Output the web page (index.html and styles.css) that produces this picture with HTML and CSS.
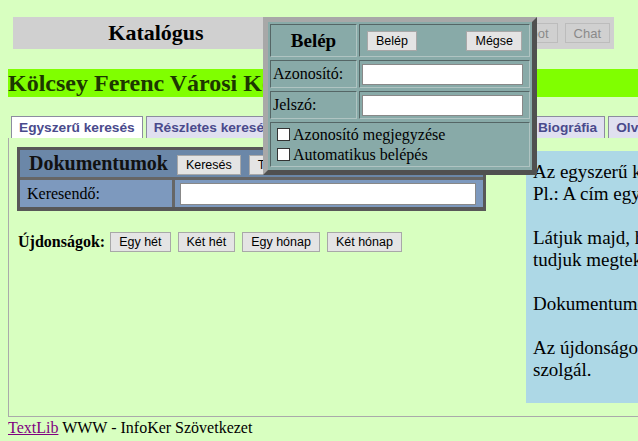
FILE: index.html
```html
<!DOCTYPE html>
<html lang="hu">
<head>
    <meta charset="UTF-8">
    <meta name="viewport" content="width=device-width, initial-scale=1.0">
    <title>Katalógus</title>
    <link rel="stylesheet" href="styles.css">
</head>
<body>

<div class="page">
    <div class="topbar">
        <div class="title">Katalógus</div>
        <div class="topbuttons">
            <button class="tbtn" disabled>Belépés</button>
            <button class="tbtn" disabled>Kosár</button>
            <button class="tbtn" disabled>Robot</button>
            <button class="tbtn" disabled>Chat</button>
        </div>
    </div>

    <h1 class="library">Kölcsey Ferenc Városi Könyvtár</h1>

    <div class="tabs">
        <div class="tab active">Egyszerű keresés</div>
        <div class="tab">Részletes keresés</div>
        <div class="tab">Böngészés</div>
        <div class="tab">Tárgyszavas keresés</div>
        <div class="tab">Biográfia</div>
        <div class="tab">Olvasójegy</div>
    </div>

    <div class="panel">
        <div class="leftcol">
            <table class="doc">
                <tr>
                    <th colspan="2">
                        <span class="doc-title">Dokumentumok</span>
                        <button class="btn">Keresés</button>
                        <button class="btn">Törlés</button>
                    </th>
                </tr>
                <tr>
                    <td class="doc-label">Keresendő:</td>
                    <td class="doc-field"><input type="text" class="search-input"></td>
                </tr>
            </table>

            <div class="news">
                <span class="news-label">Újdonságok:</span>
                <button class="btn">Egy hét</button>
                <button class="btn">Két hét</button>
                <button class="btn">Egy hónap</button>
                <button class="btn">Két hónap</button>
            </div>
        </div>

        <div class="info">
            <p>Az egyszerű keresésnél egy vagy több szót adhatunk meg.<br>Pl.: A cím egy szavát vagy a szerző nevét.</p>
            <p>Látjuk majd, hogy a találatokat hogyan<br>tudjuk megtekinteni és rendezni.</p>
            <p>Dokumentumok keresése a teljes katalógusban.</p>
            <p>Az újdonságok gomb a friss beszerzések listázására<br>szolgál.</p>
        </div>
    </div>

    <div class="footer"><a href="#" class="visited">TextLib</a> WWW - InfoKer Szövetkezet</div>
</div>

<div class="login">
    <table class="login-table">
        <tr>
            <td class="login-title">Belép</td>
            <td class="login-buttons">
                <button class="btn">Belép</button>
                <button class="btn">Mégse</button>
            </td>
        </tr>
        <tr>
            <td class="login-label">Azonosító:</td>
            <td class="login-field"><input type="text" class="login-input"></td>
        </tr>
        <tr>
            <td class="login-label">Jelszó:</td>
            <td class="login-field"><input type="password" class="login-input"></td>
        </tr>
        <tr>
            <td colspan="2" class="login-options">
                <label class="check"><input type="checkbox"> Azonosító megjegyzése</label>
                <label class="check"><input type="checkbox"> Automatikus belépés</label>
            </td>
        </tr>
    </table>
</div>

</body>
</html>
```

FILE: styles.css
```css
html {
    overflow: hidden;
}
body {
    font-family: "Liberation Serif", "Times New Roman", serif;
    font-size: 16px;
    background-color: #d8ffc0;
    margin: 8px 0 8px 8px;
    color: #000;
}
.page {
    width: 900px;
}
.topbar {
    display: flex;
    align-items: center;
    width: 601px;
    height: 32px;
    margin: 9px 0 0 5px;
    background-color: #d0d0d0;
}
.title {
    width: 286px;
    text-align: center;
    font-weight: bold;
    font-size: 22px;
}
.topbuttons {
    flex: 1;
    display: flex;
    justify-content: flex-end;
    gap: 7px;
    padding-right: 4px;
}
.tbtn {
    font-family: "Liberation Sans", Arial, sans-serif;
    font-size: 13px;
    height: 20px;
    padding: 0 8px;
    background-color: #d0d0d0;
    color: #8a8a8a;
    border: 1px solid #bcbcbc;
    border-radius: 0;
}
.library {
    margin: 20px 0 0 0;
    height: 28px;
    line-height: 28px;
    font-size: 24px;
    font-weight: bold;
    color: #1c3800;
    background-color: #80ff00;
}
.tabs {
    display: flex;
    gap: 3px;
    margin-top: 19px;
    padding-left: 3px;
}
.tab {
    height: 21px;
    line-height: 21px;
    padding: 0 7px;
    font-family: "Liberation Sans", Arial, sans-serif;
    font-size: 13.7px;
    font-weight: bold;
    color: #4a4a8c;
    background-color: #e0e0f0;
    border: 1px solid #8c8ca0;
    border-bottom: none;
    white-space: nowrap;
}
.tab.active {
    background-color: #fff;
}
.panel {
    display: flex;
    align-items: flex-start;
    gap: 40px;
    padding: 9px 0 13px 8px;
    border-left: 1px solid #aaa;
    border-bottom: 1px solid #aaa;
}
.leftcol {
    width: 469px;
}
.btn {
    font-family: "Liberation Sans", Arial, sans-serif;
    font-size: 12.5px;
    height: 20px;
    padding: 0 8px;
    background-color: #e4e4e4;
    color: #000;
    border: 1px solid #a8a8a8;
    border-radius: 0;
}
.doc {
    width: 469px;
    border-collapse: separate;
    border-spacing: 0;
    border: 3px solid #585858;
    border-bottom-width: 4px;
}
.doc th {
    height: 27px;
    padding: 0 0 0 9px;
    text-align: left;
    background-color: #6b87a8;
}
.doc-title {
    font-size: 20px;
    font-weight: bold;
    color: #111;
    margin-right: 5px;
}
.doc th .btn {
    margin-right: 4px;
    vertical-align: 1px;
}
.doc td {
    height: 27px;
    background-color: #7d99be;
    border-top: 3px solid #666;
    padding: 0;
}
.doc-label {
    width: 145px;
    padding-left: 7px !important;
    border-right: 3px solid #666;
}
.doc-field {
    padding-left: 5px !important;
}
.search-input {
    display: block;
    width: 296px;
    height: 22px;
    box-sizing: border-box;
    border: 1px solid #888;
    background-color: #fff;
}
.news {
    display: flex;
    align-items: center;
    gap: 7px;
    margin-top: 21px;
    padding-left: 1px;
}
.news-label {
    font-weight: bold;
    margin-right: -2px;
}
.info {
    width: 320px;
    margin-top: 4px;
    padding: 10px 7px 22px;
    background-color: #add8e6;
    font-size: 19px;
    line-height: 22px;
    white-space: nowrap;
}
.info p {
    margin: 0 0 22px 0;
}
.info p:last-child {
    margin-bottom: 0;
}
.footer {
    margin-top: 1px;
    line-height: 19px;
}
.visited {
    color: #800080;
}

/* login popup */
.login {
    position: absolute;
    left: 263px;
    top: 17px;
    width: 264px;
    background-color: #88aaa8;
    border-style: solid;
    border-width: 5px;
    border-color: #a8a8a8 #505050 #505050 #a8a8a8;
}
.login-table {
    width: 264px;
    border-collapse: separate;
    border-spacing: 2px 3px;
    margin: -1px 0 0 0;
}
.login-table td {
    border: 1px solid;
    border-color: #566 #b0c4c2 #b0c4c2 #566;
    padding: 0;
}
.login-title {
    width: 85px;
    height: 31px;
    text-align: center;
    font-weight: bold;
    font-size: 19px;
}
.login-buttons {
    padding: 0 7px !important;
}
.login-buttons .btn + .btn {
    float: right;
}
.login-label {
    height: 26px;
    padding-left: 2px !important;
}
.login-field {
    padding-left: 2px !important;
}
.login-input {
    display: block;
    width: 161px;
    height: 21px;
    box-sizing: border-box;
    border: 1px solid #888;
    background-color: #fff;
}
.login-options {
    height: 43px;
    padding: 0 6px !important;
}
.check {
    display: flex;
    align-items: center;
    height: 20px;
}
.check input {
    appearance: none;
    width: 13px;
    height: 13px;
    margin: 0 3px 0 0;
    border: 1px solid #333;
    background-color: #fff;
}
```
